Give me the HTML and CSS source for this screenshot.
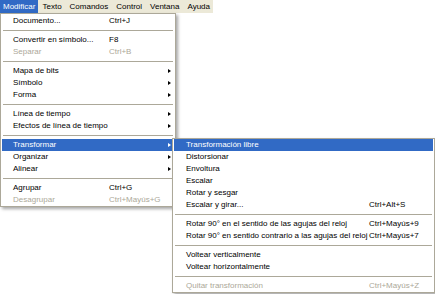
FILE: index.html
```html
<html>

<head>
    <meta charset="utf-8">
    <link rel="stylesheet" href="styles.css">
</head>

<body>
    <!-- top menu bar, "Modificar" is open -->
    <div class="menubar">
        <span class="menubar-item open">Modificar</span>
        <span class="menubar-item">Texto</span>
        <span class="menubar-item">Comandos</span>
        <span class="menubar-item">Control</span>
        <span class="menubar-item">Ventana</span>
        <span class="menubar-item">Ayuda</span>
    </div>

    <div class="menu mainMenu">
        <div class="item"><span>Documento...</span><span>Ctrl+J</span><span></span></div>
        <div class="sep"></div>
        <div class="item"><span>Convertir en símbolo...</span><span>F8</span><span></span></div>
        <div class="item disabled"><span>Separar</span><span>Ctrl+B</span><span></span></div>
        <div class="sep"></div>
        <div class="item"><span>Mapa de bits</span><span></span><span class="arrow"></span></div>
        <div class="item"><span>Símbolo</span><span></span><span class="arrow"></span></div>
        <div class="item"><span>Forma</span><span></span><span class="arrow"></span></div>
        <div class="sep"></div>
        <div class="item"><span>Línea de tiempo</span><span></span><span class="arrow"></span></div>
        <div class="item"><span>Efectos de línea de tiempo</span><span></span><span class="arrow"></span></div>
        <div class="sep"></div>
        <div class="item selected"><span>Transformar</span><span></span><span class="arrow"></span></div>
        <div class="item"><span>Organizar</span><span></span><span class="arrow"></span></div>
        <div class="item"><span>Alinear</span><span></span><span class="arrow"></span></div>
        <div class="sep"></div>
        <div class="item"><span>Agrupar</span><span>Ctrl+G</span><span></span></div>
        <div class="item disabled"><span>Desagrupar</span><span>Ctrl+Mayús+G</span><span></span></div>
    </div>

    <!-- Transformar submenu -->
    <div class="menu subMenu">
        <div class="item selected"><span>Transformación libre</span><span></span></div>
        <div class="item"><span>Distorsionar</span><span></span></div>
        <div class="item"><span>Envoltura</span><span></span></div>
        <div class="item"><span>Escalar</span><span></span></div>
        <div class="item"><span>Rotar y sesgar</span><span></span></div>
        <div class="item"><span>Escalar y girar...</span><span>Ctrl+Alt+S</span></div>
        <div class="sep"></div>
        <div class="item"><span>Rotar 90° en el sentido de las agujas del reloj</span><span>Ctrl+Mayús+9</span></div>
        <div class="item"><span>Rotar 90° en sentido contrario a las agujas del reloj</span><span>Ctrl+Mayús+7</span></div>
        <div class="sep"></div>
        <div class="item"><span>Voltear verticalmente</span><span></span></div>
        <div class="item"><span>Voltear horizontalmente</span><span></span></div>
        <div class="sep"></div>
        <div class="item disabled"><span>Quitar transformación</span><span>Ctrl+Mayús+Z</span></div>
    </div>
</body>

</html>
```

FILE: styles.css
```css
body {
    margin: 0;
    background: #fff;
    font-family: "Liberation Sans", Arial, sans-serif;
    font-size: 8px;
    color: #000;
}

.menubar {
    display: flex;
    width: 213px;
    height: 13px;
    background: #ece9d8;
}

.menubar-item {
    padding: 0 4px;
    line-height: 13px;
}

.menubar-item.open {
    background: #316ac5;
    color: #fff;
    padding: 0 3px;
}

/* dropdowns sit over the page */
.menu {
    position: absolute;
    background: #fff;
    border: 1px solid #aca899;
    box-shadow: 2px 2px 3px rgba(0, 0, 0, 0.35);
    padding: 1px 1px 0 1px;
}

.mainMenu {
    top: 13px;
    left: 0;
    width: 172px;
}

.subMenu {
    top: 138px;
    left: 172px;
    width: 259px;
    padding-top: 0;
}

.item {
    display: grid;
    height: 12px;
    line-height: 12px;
    padding-left: 11px;
    white-space: nowrap;
}

.mainMenu .item {
    grid-template-columns: 96px 1fr 6px;
}

.subMenu .item {
    grid-template-columns: 183px 1fr;
    padding-left: 12px;
}

.item.selected {
    background: #316ac5;
    color: #fff;
}

.item.disabled {
    color: #aca899;
}

.sep {
    height: 1px;
    margin: 3px 1px;
    background: #aca899;
}

.arrow {
    width: 0;
    height: 0;
    margin-top: 4px;
    border-top: 2px solid transparent;
    border-bottom: 2px solid transparent;
    border-left: 3px solid #000;
}

.selected .arrow {
    border-left-color: #fff;
}
```
